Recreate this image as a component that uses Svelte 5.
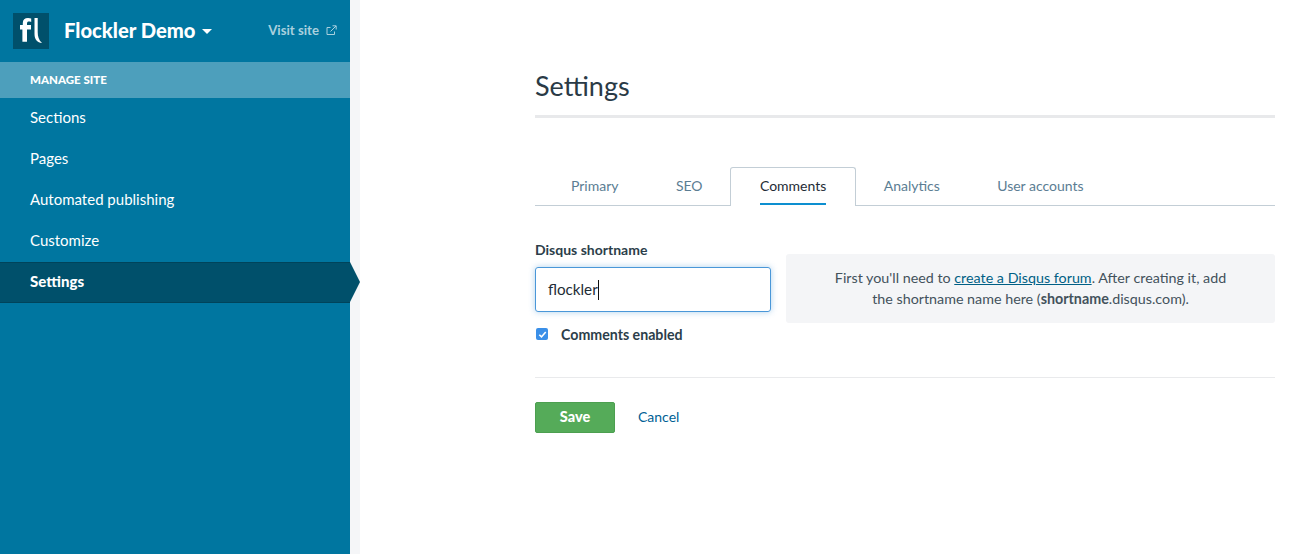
<script>
  const navItems = ['Sections', 'Pages', 'Automated publishing', 'Customize', 'Settings'];
  const tabs = ['Primary', 'SEO', 'Comments', 'Analytics', 'User accounts'];
  let activeItem = 'Settings';
  let activeTab = 'Comments';
</script>

<div class="layout">
  <aside class="sidebar">
    <header class="site">
      <div class="logo">
        <svg width="36" height="36" viewBox="0 0 36 36">
          <rect width="36" height="36" fill="#00506b" />
          <path d="M7 12h2.800v-2c0-3.200 2-5 5.200-5 1.200 0 2.300 .2 3.200 .5v3.500c-.8-.3-1.600-.4-2.200-.4-1.400 0-2 .6-2 2.200V12h4v4.500h-4v12.200H9.400V16.500H7z" fill="#fff" />
          <path d="M21.500 5h3.200v14c0 4.500 1 8 4.300 11-4.500-.5-7.500-3.500-7.500-9z" fill="#fff" />
        </svg>
      </div>
      <span class="site-name">Flockler Demo</span>
      <span class="caret"></span>
      <a class="visit" href="#visit">
        Visit site
        <svg width="11" height="11" viewBox="0 0 11 11" fill="none" stroke="#a9d0de" stroke-width="1">
          <path d="M8.500 6.500v3h-7.500v-7h3.500" />
          <path d="M4.500 6.500l5.500-5.500M6.500 .8h3.700v3.700" />
        </svg>
      </a>
    </header>
    <div class="section-title">MANAGE SITE</div>
    <nav>
      {#each navItems as item}
        <a href="#item" class="nav-item" class:active={item === activeItem}>{item}</a>
      {/each}
    </nav>
  </aside>

  <main class="main">
    <div class="content">
      <h1>Settings</h1>

      <div class="tabs">
        {#each tabs as tab}
          <a href="#tab" class="tab" class:active={tab === activeTab}><span>{tab}</span></a>
        {/each}
      </div>

      <div class="form-row">
        <div class="field">
          <label for="shortname">Disqus shortname</label>
          <div id="shortname" class="input">flockler<i class="cursor"></i></div>
          <div class="check">
            <span class="box">
              <svg width="9" height="9" viewBox="0 0 9 9" fill="none" stroke="#fff" stroke-width="1.600">
                <path d="M1.300 4.700l2.200 2.200 4.200-5" />
              </svg>
            </span>
            Comments enabled
          </div>
        </div>
        <div class="help">
          First you'll need to <a href="#forum">create a Disqus forum</a>. After creating it, add<br />
          the shortname name here (<b>shortname</b>.disqus.com).
        </div>
      </div>

      <div class="actions">
        <button class="save">Save</button>
        <a class="cancel" href="#cancel">Cancel</a>
      </div>
    </div>
  </main>
</div>

<style>
  :global(body) {
    margin: 0;
    background: #fff;
  }

  .layout {
    display: flex;
    height: 554px;
    overflow: hidden;
    font-family: "Lato", "Open Sans", sans-serif;
    color: #2c3e4a;
  }

  a {
    text-decoration: none;
  }

  .sidebar {
    width: 350px;
    flex-shrink: 0;
    background: #0076a0;
    color: #fff;
  }

  .site {
    height: 62px;
    display: flex;
    align-items: center;
    padding: 0 13px;
    box-sizing: border-box;
  }

  .logo {
    width: 36px;
    height: 36px;
    margin-right: 15px;
  }

  .logo svg {
    display: block;
  }

  .site-name {
    font-size: 20.200px;
    font-weight: 900;
    margin-bottom: 2px;
  }

  .caret {
    width: 0;
    height: 0;
    margin: 0 0 0 6px;
    border-left: 5px solid transparent;
    border-right: 5px solid transparent;
    border-top: 5px solid #fff;
  }

  .visit {
    margin-left: auto;
    display: flex;
    align-items: center;
    gap: 7px;
    font-size: 13.200px;
    font-weight: 700;
    color: #a9d0de;
    margin-bottom: 2px;
  }

  .section-title {
    height: 36px;
    line-height: 36px;
    padding-left: 30px;
    background: #4d9fbc;
    font-size: 11.500px;
    font-weight: 900;
  }

  .nav-item {
    display: block;
    height: 41px;
    line-height: 38px;
    padding-left: 30px;
    box-sizing: border-box;
    font-size: 15px;
    color: #fff;
    position: relative;
  }

  .nav-item.active {
    background: #00506b;
    border-top: 1px solid #00445b;
    border-bottom: 1px solid #00445b;
    line-height: 37px;
    font-weight: 900;
  }

  .nav-item.active::after {
    content: "";
    position: absolute;
    left: 100%;
    top: -1px;
    border-left: 10px solid #00506b;
    border-top: 20.500px solid transparent;
    border-bottom: 20.500px solid transparent;
  }

  .main {
    flex: 1;
    border-left: 10px solid #f5f6f8;
  }

  .content {
    width: 740px;
    margin-left: 175px;
  }

  h1 {
    margin: 0;
    padding-top: 67px;
    height: 48px;
    font-size: 27px;
    line-height: 38px;
    font-weight: 400;
    color: #2a3a46;
    border-bottom: 3px solid #e8e9eb;
    box-sizing: content-box;
  }

  .tabs {
    display: flex;
    margin-top: 49px;
    padding-left: 7.300px;
    height: 38px;
    border-bottom: 1px solid #c3ced6;
  }

  .tab {
    height: 39px;
    padding: 0 28.700px;
    font-size: 14px;
    line-height: 36px;
    color: #5b7d93;
    box-sizing: border-box;
    border: 1px solid transparent;
    border-bottom: 0;
    margin: 0 -1px;
  }

  .tab span {
    display: block;
    height: 37px;
    box-sizing: border-box;
  }

  .tab.active {
    background: #fff;
    color: #1e2c36;
    border-color: #c3ced6;
    border-radius: 3px 3px 0 0;
  }

  .tab.active span {
    border-bottom: 2px solid #0d8fd0;
  }

  .form-row {
    display: grid;
    grid-template-columns: 236px 1fr;
    gap: 15px;
    margin-top: 35px;
    padding-bottom: 34px;
    border-bottom: 1px solid #e9eaec;
  }

  label {
    display: block;
    font-size: 14px;
    font-weight: 700;
    line-height: 18px;
    margin-bottom: 8px;
    color: #2c3e4a;
  }

  .input {
    height: 45px;
    box-sizing: border-box;
    border: 1px solid #4a97d8;
    border-radius: 3px;
    box-shadow: 0 0 6px rgba(74, 151, 216, 0.45);
    padding: 0 12px;
    line-height: 43px;
    font-size: 15.200px;
    color: #1e2c36;
  }

  .cursor {
    display: inline-block;
    width: 1px;
    height: 20px;
    background: #111;
    vertical-align: -5px;
  }

  .check {
    display: flex;
    align-items: center;
    margin-top: 13px;
    height: 18px;
    font-size: 14.200px;
    font-weight: 700;
    color: #2c3e4a;
  }

  .box {
    width: 12px;
    height: 12px;
    margin: 0 13px 0 1px;
    border-radius: 2px;
    background: #3a8fe8;
    display: flex;
    align-items: center;
    justify-content: center;
  }

  .help {
    align-self: start;
    margin-top: 13px;
    height: 69px;
    box-sizing: border-box;
    padding-top: 13px;
    background: #f4f5f7;
    border-radius: 3px;
    text-align: center;
    font-size: 14.300px;
    line-height: 21px;
    color: #43525c;
  }

  .help a {
    color: #005f85;
    text-decoration: underline;
  }

  .actions {
    display: flex;
    align-items: center;
    margin-top: 24px;
  }

  .save {
    width: 80px;
    height: 31px;
    padding: 0 0 2px;
    border: 1px solid #4c9f50;
    border-radius: 2px;
    background: #55ab59;
    color: #fff;
    font-family: inherit;
    font-size: 14.500px;
    font-weight: 900;
  }

  .cancel {
    margin-left: 23px;
    padding-bottom: 2px;
    font-size: 14px;
    color: #005f95;
  }
</style>
